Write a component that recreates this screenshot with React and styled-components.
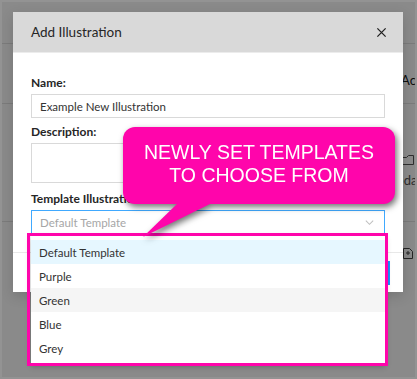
import React from 'react'
import styled, { createGlobalStyle } from 'styled-components'

const GlobalStyle = createGlobalStyle`
    html, body {
        margin: 0;
        padding: 0;
        background: #8a8a8a;
    }
    * {
        box-sizing: border-box;
    }
`

const Frame = styled.div`
    position: relative;
    width: 417px;
    height: 379px;
    overflow: hidden;
    border: 2px solid #939393;
    background: #ffffff;
    font-family: Lato, 'Noto Sans', sans-serif;
    color: #262626;
`

const Page = styled.div`
    display: flex;
    flex-direction: column;
    padding-top: 41px;
`

const PageRow = styled.div`
    display: flex;
    flex-direction: column;
    gap: ${props => props.gap || 0}px;
    height: ${props => props.height}px;
    padding-top: ${props => props.pad || 0}px;
    border-top: 1px solid #e4e4e4;
`

const PageLine = styled.div`
    display: grid;
    grid-template-columns: ${props => props.col}px 1fr;
    font-size: 13px;
    white-space: nowrap;
    color: ${props => props.muted ? '#555' : '#1a1a1a'};
    overflow: hidden;
`

const Mask = styled.div`
    position: absolute;
    inset: 0;
    background: rgba(0, 0, 0, 0.46);
`

const Modal = styled.div`
    position: absolute;
    left: 11px;
    top: 10px;
    width: 390px;
    height: 280px;
    background: #ffffff;
    display: flex;
    flex-direction: column;
    box-shadow: 0 4px 12px rgba(0, 0, 0, 0.15);
`

const Header = styled.div`
    display: flex;
    align-items: center;
    justify-content: space-between;
    height: 41px;
    padding: 0 16px 0 18px;
    background: #d9d9d9;
    border-bottom: 1px solid #ececec;
`

const Title = styled.div`
    font-size: 13.5px;
    color: #262626;
`

const Close = styled.div`
    display: flex;
`

const Body = styled.div`
    display: flex;
    flex-direction: column;
    padding: 20px 18px 0 18px;
`

const Label = styled.div`
    font-size: 12px;
    font-weight: 700;
    line-height: 20px;
    margin-top: ${props => props.gap || 0}px;
    margin-bottom: 1px;
    color: #262626;
`

const Input = styled.div`
    height: 24px;
    border: 1px solid #d9d9d9;
    padding: 0 8px;
    display: flex;
    align-items: center;
    font-size: 11.5px;
    color: #333;
`

const TextArea = styled.div`
    height: 40px;
    border: 1px solid #d9d9d9;
`

const SelectWrap = styled.div`
    position: relative;
`

const Select = styled(Input)`
    border-color: #40a9ff;
    justify-content: space-between;
    padding-right: 9px;
    color: #a6a6a6;
`

const Dropdown = styled.div`
    position: absolute;
    left: 0;
    right: 0;
    top: 26px;
    padding: 4px 0;
    background: #ffffff;
    box-shadow: 0 2px 6px rgba(0, 0, 0, 0.3);
    z-index: 3;
`

const Option = styled.div`
    height: 24px;
    display: flex;
    align-items: center;
    padding: 0 8px;
    font-size: 11.5px;
    color: #333;
    background: ${props => props.active ? '#e6f7ff' : props.hover ? '#f5f5f5' : '#ffffff'};
`

const Highlight = styled.div`
    position: absolute;
    left: -4px;
    right: -3px;
    top: 23px;
    height: 133px;
    border: 3px solid #ff05ab;
    z-index: 4;
`

const Footer = styled.div`
    display: flex;
    justify-content: flex-end;
    margin-top: auto;
    padding: 8px 13px 7px 16px;
    border-top: 1px solid #e8e8e8;
`

const Button = styled.div`
    width: 60px;
    height: 24px;
    background: #1890ff;
`

const Callout = styled.div`
    position: absolute;
    left: 121px;
    top: 125px;
    width: 272px;
    z-index: 5;
    filter: drop-shadow(2px 3px 3px rgba(0, 0, 0, 0.55));
`

const Bubble = styled.div`
    height: 77px;
    border-radius: 12px;
    background: #ff05ab;
    color: #ffffff;
    font-family: 'Liberation Sans', Arial, sans-serif;
    font-size: 19.5px;
    line-height: 23px;
    text-align: center;
    display: flex;
    flex-direction: column;
    justify-content: center;
    padding-bottom: 4px;
`

const Tail = styled.svg`
    display: block;
    margin-top: -1px;
`

function Chevron() {
    return (
        <svg width="11" height="11" viewBox="0 0 12 12" fill="none" stroke="#bfbfbf" strokeWidth="1.1">
            <path d="M2 4l4 4 4-4" />
        </svg>
    )
}

function CloseIcon() {
    return (
        <svg width="11" height="11" viewBox="0 0 12 12" stroke="#1f1f1f" strokeWidth="1.4">
            <path d="M1.5 1.5l9 9M10.5 1.5l-9 9" />
        </svg>
    )
}

function TagIcon() {
    return (
        <svg width="14" height="12" viewBox="0 0 14 12" fill="none" stroke="#555" strokeWidth="1">
            <path d="M0.5 3.5h6l2 -2h5v9h-13z" />
        </svg>
    )
}

function FileIcon() {
    return (
        <svg width="10" height="13" viewBox="0 0 10 13" fill="none" stroke="#444" strokeWidth="1">
            <path d="M0.5 2.5h6l3 3v7h-9z M3 7h4 M5 5v4" />
        </svg>
    )
}

const templates = ['Default Template', 'Purple', 'Green', 'Blue', 'Grey']

export default function App() {
    return (
        <Frame>
            <GlobalStyle />
            <Page>
                <PageRow height={60} pad={28}>
                    <PageLine col={399}>
                        <span />
                        <span>Actions</span>
                    </PageLine>
                </PageRow>
                <PageRow height={118} pad={50} gap={6}>
                    <PageLine col={398} muted>
                        <span />
                        <TagIcon />
                    </PageLine>
                    <PageLine col={385} muted>
                        <span />
                        <span>Update</span>
                    </PageLine>
                </PageRow>
                <PageRow height={80} pad={24}>
                    <PageLine col={401}>
                        <span />
                        <FileIcon />
                    </PageLine>
                </PageRow>
            </Page>
            <Mask />
            <Modal>
                <Header>
                    <Title>Add Illustration</Title>
                    <Close><CloseIcon /></Close>
                </Header>
                <Body>
                    <Label>Name:</Label>
                    <Input>Example New Illustration</Input>
                    <Label gap={4}>Description:</Label>
                    <TextArea />
                    <Label gap={6}>Template Illustration</Label>
                    <SelectWrap>
                        <Select>
                            Default Template
                            <Chevron />
                        </Select>
                        <Dropdown>
                            {templates.map((t, i) => (
                                <Option key={t} active={i === 0} hover={i === 2}>{t}</Option>
                            ))}
                        </Dropdown>
                        <Highlight />
                    </SelectWrap>
                </Body>
                <Footer>
                    <Button />
                </Footer>
            </Modal>
            <Callout>
                <Bubble>
                    <div>NEWLY SET TEMPLATES</div>
                    <div>TO CHOOSE FROM</div>
                </Bubble>
                <Tail width="272" height="34" viewBox="0 0 272 34">
                    <polygon points="55,0 89,0 20,34" fill="#ff05ab" />
                </Tail>
            </Callout>
        </Frame>
    )
}
